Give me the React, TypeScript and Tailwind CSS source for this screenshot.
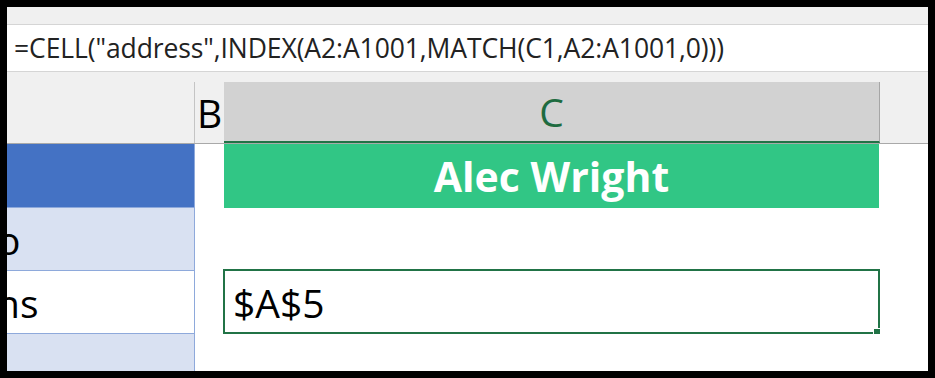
const font = { fontFamily: '"Open Sans", "Noto Sans", sans-serif' };

function FormulaBar() {
  return (
    <div className="flex h-[47px] shrink-0 items-center border-b border-[#d5d5d5] bg-white pl-[7px]">
      <span className="text-[26.5px] leading-none tracking-[-0.1px] text-[#222]">=CELL("address",INDEX(A2:A1001,MATCH(C1,A2:A1001,0)))</span>
    </div>
  );
}

function Headers() {
  return (
    <div className="flex h-[72px] shrink-0 border-b border-[#a9a9a9] bg-[#f0f0f0]">
      <div className="w-[187px]" />
      <div className="mt-[10px] flex w-[30px] items-center justify-center border-l border-[#c4c4c4] text-[39px] leading-none text-black">
        B
      </div>
      <div className="mt-[10px] flex w-[656px] items-center justify-center border-r border-b-2 border-r-[#a6a6a6] border-b-[#217346] bg-[#d2d2d2] text-[39px] leading-none text-[#1e6b40]">
        C
      </div>
      <div className="flex-1" />
    </div>
  );
}

function Row({ a, shift, aBg, h, c, selected }: { a?: string; shift?: string; aBg: string; h: string; c?: React.ReactNode; selected?: boolean }) {
  return (
    <div className={`flex shrink-0 ${h}`}>
      <div className={`flex w-[187px] items-center overflow-hidden border-b border-[#8ea9db] ${aBg}`}>
        {a && <span className={`${shift} text-[39px] leading-none text-black`}>{a}</span>}
      </div>
      <div className="w-[30px] border-l border-[#8ea9db] bg-white" />
      <div className="relative w-[656px] bg-white">
        {c}
        {selected && (
          <>
            <div className="absolute -top-[2px] -left-[1px] right-0 bottom-0 border-2 border-[#217346]" />
            <div className="absolute -right-[1px] -bottom-[2px] h-[8px] w-[8px] border border-white bg-[#217346]" />
          </>
        )}
      </div>
      <div className="flex-1 bg-white" />
    </div>
  );
}

export default function App() {
  return (
    <div className="h-[378px] w-[935px] overflow-hidden bg-black p-[7px]" style={font}>
      <div className="flex h-full w-full flex-col overflow-hidden bg-white">
        <div className="h-[18px] shrink-0 border-b border-[#d5d5d5] bg-[#f0f0f0]" />
        <FormulaBar />
        <Headers />
        <Row
          aBg="bg-[#4472c4]"
          h="h-[64px]"
          c={
            <div className="flex h-full w-[655px] items-center justify-center bg-[#31c685] text-[41px] font-bold leading-none text-white">
              Alec Wright
            </div>
          }
        />
        <Row aBg="bg-[#d9e1f2]" h="h-[63px]" a="o" shift="-ml-[10px]" />
        <Row
          aBg="bg-white"
          h="h-[63px]"
          a="ns"
          shift="-ml-[11px]"
          selected
          c={<div className="flex h-full items-center pl-[9px] text-[39px] leading-none text-black">$A$5</div>}
        />
        <Row aBg="bg-[#d9e1f2]" h="h-[63px]" />
      </div>
    </div>
  );
}
